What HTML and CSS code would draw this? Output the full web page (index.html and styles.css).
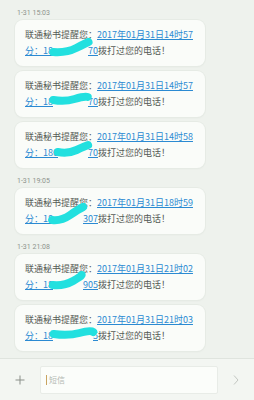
FILE: index.html
```html
<!DOCTYPE html>
<html>
    <head>
        <title>短信</title>
        <link rel="stylesheet" href="styles.css">
    </head>
    <body>
        <main class="thread">
            <p class="time">1-31 15:03</p>
            <div class="bubble">联通秘书提醒您：<a class="link">2017年01月31日14时57<br>分：18<span class="mask w7"><svg viewBox="0 0 50 20" preserveAspectRatio="none"><path d="M4 14 Q20 15 32 10 T47 4" vector-effect="non-scaling-stroke"/></svg></span>70</a>拨打过您的电话！</div>
            <div class="bubble">联通秘书提醒您：<a class="link">2017年01月31日14时57<br>分：18<span class="mask w7"><svg viewBox="0 0 50 20" preserveAspectRatio="none"><path d="M4 11 Q18 13 30 10 T46 8" vector-effect="non-scaling-stroke"/></svg></span>70</a>拨打过您的电话！</div>
            <div class="bubble">联通秘书提醒您：<a class="link">2017年01月31日14时58<br>分：186<span class="mask w6"><svg viewBox="0 0 50 20" preserveAspectRatio="none"><path d="M4 12 Q18 14 30 10 T46 5" vector-effect="non-scaling-stroke"/></svg></span>70</a>拨打过您的电话！</div>

            <p class="time">1-31 19:05</p>
            <div class="bubble">联通秘书提醒您：<a class="link">2017年01月31日18时59<br>分：18<span class="mask w6"><svg viewBox="0 0 50 20" preserveAspectRatio="none"><path d="M3 14 Q16 15 28 9 T46 1" vector-effect="non-scaling-stroke"/></svg></span>307</a>拨打过您的电话！</div>

            <p class="time">1-31 21:08</p>
            <div class="bubble">联通秘书提醒您：<a class="link">2017年01月31日21时02<br>分：18<span class="mask w6"><svg viewBox="0 0 50 20" preserveAspectRatio="none"><path d="M4 13 Q20 14 32 9 T44 3" vector-effect="non-scaling-stroke"/></svg></span>905</a>拨打过您的电话！</div>
            <div class="bubble">联通秘书提醒您：<a class="link">2017年01月31日21时03<br>分：18<span class="mask w8"><svg viewBox="0 0 50 20" preserveAspectRatio="none"><path d="M4 11 Q20 13 32 10 T47 9" vector-effect="non-scaling-stroke"/></svg></span>5</a>拨打过您的电话！</div>
        </main>

        <footer class="compose">
            <span class="plus">
                <svg viewBox="0 0 10 10"><path d="M5 0.5 V9.5 M0.5 5 H9.5"/></svg>
            </span>
            <div class="input"><span class="caret"></span>短信</div>
            <span class="send">
                <svg viewBox="0 0 6 10"><path d="M1 0.5 L5 5 L1 9.5"/></svg>
            </span>
        </footer>
    </body>
</html>
```

FILE: styles.css
```css
body {
    margin: 0;
    height: 100vh;
    display: flex;
    flex-direction: column;
    overflow: hidden;
    background-color: #eef2ed;
    font-family: "Noto Sans CJK SC", "Noto Sans", sans-serif;
}

.thread {
    flex: 1;
    padding: 5px 49px 0 15px;
}

.time {
    margin: 0;
    padding: 3px 0 2px 2px;
    font-family: Roboto, sans-serif;
    font-size: 7px;
    line-height: 10px;
    color: #8d928c;
}

.bubble {
    margin-bottom: 5px;
    padding: 7px 10px;
    border-radius: 8px;
    background-color: #fafcf9;
    box-shadow: 0 0 0 1px #e6ebe5, 0 1px 2px rgba(0, 0, 0, 0.05);
    font-size: 9px;
    line-height: 16px;
    color: #555a55;
}

.link {
    color: #2b8ad2;
    text-decoration: underline;
}

/* the cyan scribble over the phone number */
.mask {
    display: inline-block;
    position: relative;
    height: 10px;
}
.w6 { width: 30px; }
.w7 { width: 35px; }
.w8 { width: 40px; }

.mask svg {
    position: absolute;
    left: -3px;
    top: -6px;
    width: calc(100% + 6px);
    height: 20px;
    overflow: visible;
}
.mask path {
    fill: none;
    stroke: #22e0df;
    stroke-width: 8px;
    stroke-linecap: round;
    stroke-linejoin: round;
}

.compose {
    height: 41px;
    display: flex;
    align-items: center;
    border-top: 1px solid #dfe4de;
    background-color: #f3f6f2;
}

.plus {
    width: 40px;
    display: flex;
    justify-content: center;
}
.plus svg {
    width: 10px;
    height: 10px;
}
.plus path {
    fill: none;
    stroke: #8a8f89;
    stroke-width: 1;
}

.input {
    flex: 1;
    height: 26px;
    display: flex;
    align-items: center;
    padding-left: 5px;
    border: 1px solid #e8ece7;
    border-radius: 2px;
    background-color: #fbfdfa;
    font-size: 8px;
    color: #b4b9b3;
}

.caret {
    width: 1px;
    height: 10px;
    margin-right: 2px;
    background-color: #c9a460;
}

.send {
    width: 36px;
    display: flex;
    justify-content: center;
}
.send svg {
    width: 6px;
    height: 10px;
}
.send path {
    fill: none;
    stroke: #c2c6c1;
    stroke-width: 1;
}
```
